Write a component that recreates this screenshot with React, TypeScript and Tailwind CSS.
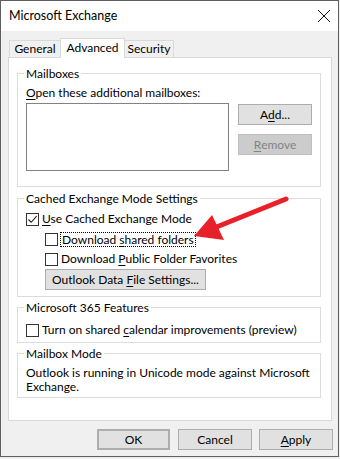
import React from "react";

const Check = ({ checked = false }: { checked?: boolean }) => (
  <span className="flex h-[13px] w-[13px] shrink-0 items-center justify-center border border-[#333333] bg-white">
    {checked && (
      <svg width="11" height="11" viewBox="0 0 11 11">
        <path d="M1.5 5.5 L4.2 8.3 L9.6 2.2" fill="none" stroke="#222" strokeWidth="1.1" />
      </svg>
    )}
  </span>
);

const Btn = ({
  children,
  className = "",
  disabled = false,
}: {
  children: React.ReactNode;
  className?: string;
  disabled?: boolean;
}) => (
  <div
    className={
      "flex h-[21px] items-center justify-center leading-[16px] " +
      (disabled
        ? "border border-[#bfbfbf] bg-[#cccccc] text-[#838383] "
        : "border border-[#adadad] bg-[#e1e1e1] text-black ") +
      className
    }
  >
    {children}
  </div>
);

const Group = ({
  label,
  className = "",
  children,
}: {
  label: string;
  className?: string;
  children: React.ReactNode;
}) => (
  <div className={"relative ml-[8px] w-[304px] border border-[#dcdcdc] " + className}>
    <span className="absolute left-[6px] top-[-8px] bg-white px-[2px] leading-[16px]">{label}</span>
    {children}
  </div>
);

const U = ({ children }: { children: React.ReactNode }) => (
  <span className="underline decoration-1 underline-offset-[2px]">{children}</span>
);

export default function App() {
  return (
    <div className="relative h-[459px] w-[340px] bg-[#f0f0f0] font-['Segoe_UI','Lato',sans-serif] text-[12px] text-black">
      <div className="flex h-[457px] w-[339px] flex-col border border-[#5f5f5f]">
        {/* title bar */}
        <div className="flex h-[30px] items-center justify-between bg-white pl-[8px] pr-[7px]">
          <span className="text-[12.5px] leading-[16px]">Microsoft Exchange</span>
          <svg width="14" height="14" viewBox="0 0 14 14">
            <path d="M1 1 L13 13 M13 1 L1 13" stroke="#111" strokeWidth="1" />
          </svg>
        </div>

        {/* tabs */}
        <div className="relative z-10 flex h-[19px] items-end pl-[8px] mt-[7px]">
          <div className="flex h-[17px] w-[51px] justify-center border-l border-t border-[#d9d9d9] leading-[16px]">
            General
          </div>
          <div className="-mb-px flex h-[20px] w-[65px] justify-center border-x border-t border-[#d9d9d9] bg-white pt-[1px] leading-[16px]">
            Advanced
          </div>
          <div className="flex h-[17px] w-[49px] justify-center border-r border-t border-[#d9d9d9] leading-[16px]">
            Security
          </div>
        </div>

        {/* panel */}
        <div className="ml-[7px] flex h-[364px] w-[324px] flex-col border border-[#d9d9d9] bg-white">
          <Group label="Mailboxes" className="mt-[15px] h-[114px] pl-[8px] pt-[11px]">
            <div className="leading-[16px]">
              <U>O</U>pen these additional mailboxes:
            </div>
            <div className="mt-[2px] flex">
              <div className="h-[68px] w-[203px] border border-[#828282]" />
              <div className="ml-[9px] flex flex-col gap-[9px] pt-[1px]">
                <Btn className="w-[74px]">
                  A<U>d</U>d...
                </Btn>
                <Btn className="w-[74px]" disabled>
                  <U>R</U>emove
                </Btn>
              </div>
            </div>
          </Group>

          <Group label="Cached Exchange Mode Settings" className="mt-[11px] h-[99px] pl-[8px] pt-[10px]">
            <div className="flex h-[20px] items-center gap-[3px]">
              <Check checked />
              <span className="leading-[16px]">
                <U>U</U>se Cached Exchange Mode
              </span>
            </div>
            <div className="flex h-[20px] items-center gap-[2px] pl-[19px]">
              <Check />
              <span className="border border-dotted border-black px-[1px] leading-[13px]">
                Download <U>s</U>hared folders
              </span>
            </div>
            <div className="flex h-[20px] items-center gap-[3px] pl-[19px]">
              <Check />
              <span className="leading-[16px]">
                Download <U>P</U>ublic Folder Favorites
              </span>
            </div>
            <div className="pl-[19px]">
              <Btn className="w-[161px]">
                Outlook Data&nbsp;<U>F</U>ile Settings...
              </Btn>
            </div>
          </Group>

          <Group label="Microsoft 365 Features" className="mt-[10px] h-[36px] pl-[8px] pt-[14px]">
            <div className="flex h-[16px] items-center gap-[3px]">
              <Check />
              <span className="leading-[16px]">
                Turn on shared <U>c</U>alendar improvements (preview)
              </span>
            </div>
          </Group>

          <Group label="Mailbox Mode" className="mt-[10px] h-[45px] pl-[8px] pt-[12px]">
            <p className="whitespace-nowrap leading-[14px]">
              Outlook is running in Unicode mode against Microsoft
              <br />
              Exchange.
            </p>
          </Group>
        </div>

        {/* dialog buttons */}
        <div className="mt-[8px] flex">
          <Btn className="ml-[96px] w-[73px] border-2 border-[#0078d7]">OK</Btn>
          <Btn className="ml-[8px] w-[74px]">Cancel</Btn>
          <Btn className="ml-[7px] w-[74px]">
            <U>A</U>pply
          </Btn>
        </div>
      </div>

      {/* annotation arrow */}
      <svg className="pointer-events-none absolute left-0 top-0" width="340" height="459" viewBox="0 0 340 459">
        <path d="M286 199 L214 228" stroke="#e8202a" strokeWidth="5" strokeLinecap="round" />
        <polygon points="194,236 212,215 224,240" fill="#e8202a" />
      </svg>
    </div>
  );
}
